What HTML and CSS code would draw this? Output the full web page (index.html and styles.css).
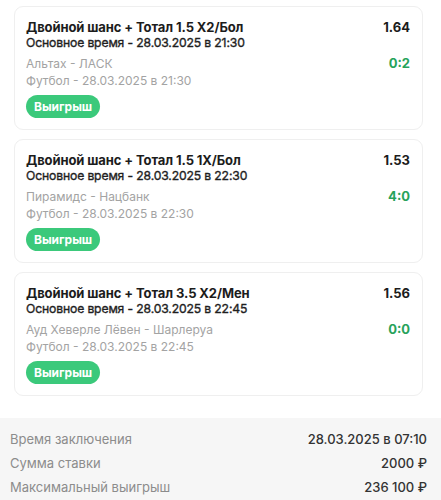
FILE: index.html
```html
<!DOCTYPE html>
<html lang="ru">
<head>
<meta charset="utf-8">
<link rel="stylesheet" href="styles.css">
</head>
<body>
<div class="list">
  <div class="card">
    <div class="row">
      <div class="title">Двойной шанс + Тотал 1.5 Х2/Бол</div>
      <div class="odds">1.64</div>
    </div>
    <div class="sub">Основное время - 28.03.2025 в 21:30</div>
    <div class="row teams">
      <div class="muted">Альтах - ЛАСК</div>
      <div class="score">0:2</div>
    </div>
    <div class="muted">Футбол - 28.03.2025 в 21:30</div>
    <div class="badge">Выигрыш</div>
  </div>
  <div class="card">
    <div class="row">
      <div class="title">Двойной шанс + Тотал 1.5 1Х/Бол</div>
      <div class="odds">1.53</div>
    </div>
    <div class="sub">Основное время - 28.03.2025 в 22:30</div>
    <div class="row teams">
      <div class="muted">Пирамидс - Нацбанк</div>
      <div class="score">4:0</div>
    </div>
    <div class="muted">Футбол - 28.03.2025 в 22:30</div>
    <div class="badge">Выигрыш</div>
  </div>
  <div class="card">
    <div class="row">
      <div class="title">Двойной шанс + Тотал 3.5 Х2/Мен</div>
      <div class="odds">1.56</div>
    </div>
    <div class="sub">Основное время - 28.03.2025 в 22:45</div>
    <div class="row teams">
      <div class="muted">Ауд Хеверле Лёвен - Шарлеруа</div>
      <div class="score">0:0</div>
    </div>
    <div class="muted">Футбол - 28.03.2025 в 22:45</div>
    <div class="badge">Выигрыш</div>
  </div>
</div>
<div class="summary">
  <div class="srow"><span class="label">Время заключения</span><span class="value">28.03.2025 в 07:10</span></div>
  <div class="srow"><span class="label">Сумма ставки</span><span class="value">2000 ₽</span></div>
  <div class="srow"><span class="label">Максимальный выигрыш</span><span class="value">236 100 ₽</span></div>
</div>
</body>
</html>
```
FILE: styles.css
```css
html, body {
  margin: 0;
  padding: 0;
  background: #ffffff;
}
body {
  font-family: Inter, "Noto Sans", "Liberation Sans", sans-serif;
  color: #1c1c1c;
  width: 441px;
  height: 500px;
  overflow: hidden;
}
.list {
  display: flex;
  flex-direction: column;
  gap: 9px;
  padding: 6px 18px 0 14px;
}
.card {
  border: 1px solid #efefef;
  border-radius: 9px;
  padding: 12px 12px 11px 11px;
  display: flex;
  flex-direction: column;
  align-items: flex-start;
}
.row {
  display: flex;
  justify-content: space-between;
  align-items: center;
  align-self: stretch;
}
.title {
  font-size: 13px;
  font-weight: 700;
  line-height: 16px;
  letter-spacing: -0.1px;
}
.odds {
  font-size: 13px;
  font-weight: 700;
  line-height: 16px;
}
.sub {
  font-size: 12.2px;
  font-weight: 400;
  line-height: 16px;
  color: #1f1f1f;
  letter-spacing: -0.15px;
  -webkit-text-stroke: 0.35px #1f1f1f;
}
.teams {
  margin-top: 4px;
}
.muted {
  font-size: 12px;
  line-height: 17px;
  color: #a3a3a3;
}
.score {
  font-size: 13px;
  font-weight: 700;
  line-height: 17px;
  color: #27a35b;
}
.badge {
  margin-top: 6px;
  background: #3bc97b;
  color: #ffffff;
  font-size: 12px;
  font-weight: 700;
  line-height: 23px;
  height: 23px;
  padding: 0 8px;
  border-radius: 12px;
}
.summary {
  margin-top: 22px;
  background: #f6f6f6;
  padding: 9px 14px 0 10px;
  height: 82px;
  box-sizing: border-box;
}
.srow {
  display: flex;
  justify-content: space-between;
  align-items: center;
  height: 24px;
  font-size: 13px;
}
.label {
  color: #8c8c8c;
}
.value {
  color: #333333;
  font-weight: 500;
}
```
